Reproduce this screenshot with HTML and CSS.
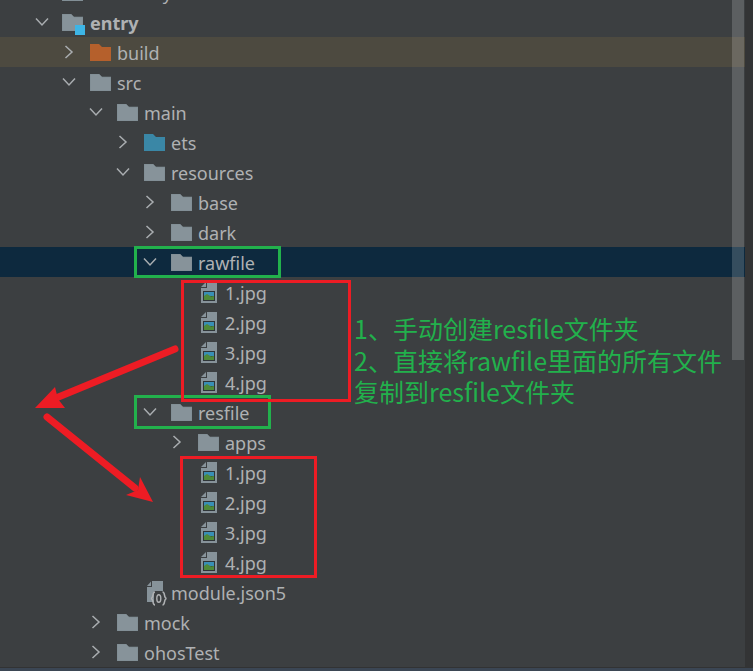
FILE: index.html
```html
<!DOCTYPE html>
<html lang="zh-CN">
<head>
<meta charset="utf-8">
<title>Project tree</title>
<link rel="stylesheet" href="styles.css">
</head>
<body>
<svg class="defs" width="0" height="0" aria-hidden="true">
  <defs>
    <symbol id="folder" viewBox="0 0 21 17"><path d="M0 0H9L12 3H21V17H0Z" fill="#87939a" stroke="#7b868d" stroke-width=".6"/></symbol>
    <symbol id="chev-r" viewBox="0 0 10 14"><path d="M1.500 1L8 7L1.500 13" fill="none" stroke="#a9adb0" stroke-width="1.500"/></symbol>
    <symbol id="chev-d" viewBox="0 0 14 10"><path d="M1 1.500L7 8L13 1.500" fill="none" stroke="#a9adb0" stroke-width="1.500"/></symbol>
    <symbol id="image" viewBox="0 0 16 21">
      <path d="M6 0H16V21H0V6H6Z" fill="#87939a"/>
      <path d="M0 5L5 0V5Z" fill="#87939a"/>
      <rect x="2" y="9" width="12" height="10" fill="#2f3538"/>
      <rect x="3" y="10" width="10" height="4" fill="#3a8fb5"/>
      <path d="M3 14L6 12L10 14.500L13 14V18H3Z" fill="#4f8a3a"/>
    </symbol>
  </defs>
</svg>
<main class="panel">
  <ul class="tree">
    <li class="row d1 plain"><svg class="fold"><use href="#folder"/></svg><span class="label">oh-library</span></li>
    <li class="row d1 module"><svg class="chev"><use href="#chev-d"/></svg>
      <span class="module-icon"><svg class="fold-big"><use href="#folder"/></svg><i class="badge"></i></span>
      <span class="label strong">entry</span></li>
    <li class="row d2 excluded"><svg class="chev"><use href="#chev-r"/></svg><svg class="fold orange" viewBox="0 0 21 17"><path d="M0 0H9L12 3H21V17H0Z"/></svg><span class="label">build</span></li>
    <li class="row d2"><svg class="chev"><use href="#chev-d"/></svg><svg class="fold"><use href="#folder"/></svg><span class="label">src</span></li>
    <li class="row d3"><svg class="chev"><use href="#chev-d"/></svg><svg class="fold"><use href="#folder"/></svg><span class="label">main</span></li>
    <li class="row d4"><svg class="chev"><use href="#chev-r"/></svg><svg class="fold blue" viewBox="0 0 21 17"><path d="M0 0H9L12 3H21V17H0Z"/></svg><span class="label">ets</span></li>
    <li class="row d4"><svg class="chev"><use href="#chev-d"/></svg><svg class="fold"><use href="#folder"/></svg><span class="label">resources</span></li>
    <li class="row d5"><svg class="chev"><use href="#chev-r"/></svg><svg class="fold"><use href="#folder"/></svg><span class="label">base</span></li>
    <li class="row d5"><svg class="chev"><use href="#chev-r"/></svg><svg class="fold"><use href="#folder"/></svg><span class="label">dark</span></li>
    <li class="row d5 selected"><svg class="chev"><use href="#chev-d"/></svg><svg class="fold"><use href="#folder"/></svg><span class="label">rawfile</span></li>
    <li class="row d6 file"><svg class="img"><use href="#image"/></svg><span class="label">1.jpg</span></li>
    <li class="row d6 file"><svg class="img"><use href="#image"/></svg><span class="label">2.jpg</span></li>
    <li class="row d6 file"><svg class="img"><use href="#image"/></svg><span class="label">3.jpg</span></li>
    <li class="row d6 file"><svg class="img"><use href="#image"/></svg><span class="label">4.jpg</span></li>
    <li class="row d5"><svg class="chev"><use href="#chev-d"/></svg><svg class="fold"><use href="#folder"/></svg><span class="label">resfile</span></li>
    <li class="row d6"><svg class="chev"><use href="#chev-r"/></svg><svg class="fold"><use href="#folder"/></svg><span class="label">apps</span></li>
    <li class="row d6 file"><svg class="img"><use href="#image"/></svg><span class="label">1.jpg</span></li>
    <li class="row d6 file"><svg class="img"><use href="#image"/></svg><span class="label">2.jpg</span></li>
    <li class="row d6 file"><svg class="img"><use href="#image"/></svg><span class="label">3.jpg</span></li>
    <li class="row d6 file"><svg class="img"><use href="#image"/></svg><span class="label">4.jpg</span></li>
    <li class="row d4 json">
      <svg class="json-icon" viewBox="0 0 20 25">
        <path d="M5 0H16V10H7V21H0V6H5Z" fill="#87939a"/>
        <path d="M0 5L4 .5V5Z" fill="#87939a"/>
        <path d="M8 11C5 11 7 17 4 17.500C7 18 5 24 8 24M15.500 11C18.500 11 16.500 17 19.500 17.500C16.500 18 18.500 24 15.500 24" fill="none" stroke="#b0b2b4" stroke-width="1.500"/>
        <ellipse cx="11.800" cy="17.500" rx="2" ry="3.800" fill="none" stroke="#b0b2b4" stroke-width="1.400"/>
      </svg><span class="label">module.json5</span></li>
    <li class="row d3"><svg class="chev"><use href="#chev-r"/></svg><svg class="fold"><use href="#folder"/></svg><span class="label">mock</span></li>
    <li class="row d3"><svg class="chev"><use href="#chev-r"/></svg><svg class="fold"><use href="#folder"/></svg><span class="label">ohosTest</span></li>
  </ul>
  <div class="scrollbar"></div>
</main>
<footer class="status"></footer>
<svg class="marks" viewBox="0 0 753 671" aria-hidden="true">
  <g fill="none" stroke="#22b14c" stroke-width="3">
    <rect x="135.500" y="247.500" width="144" height="29"/>
    <rect x="135.500" y="396.500" width="134" height="31"/>
  </g>
  <g fill="none" stroke="#ed1c24" stroke-width="3">
    <rect x="182.500" y="281.500" width="167" height="119"/>
    <rect x="181.500" y="457.500" width="134" height="119"/>
  </g>
  <g fill="#ed1c24">
    <path d="M175 349L56 398" stroke="#ed1c24" stroke-width="7" stroke-linecap="round"/>
    <path d="M35 408L55 387L58 399L65 408Z"/>
    <path d="M47 417L135 488" stroke="#ed1c24" stroke-width="7" stroke-linecap="round"/>
    <path d="M153 502L140 477L138 490L126 495Z"/>
  </g>
</svg>
<p class="note">1、手动创建resfile文件夹<br>2、直接将rawfile里面的所有文件<br>复制到resfile文件夹</p>
</body>
</html>
```
FILE: styles.css
```css
* { box-sizing: border-box; }
html, body { margin: 0; padding: 0; }
body {
  width: 753px;
  height: 671px;
  overflow: hidden;
  position: relative;
  background: #333435;
  font-family: "Noto Sans", "Noto Sans CJK SC", sans-serif;
}
.defs { position: absolute; }
.panel {
  position: relative;
  width: 745px;
  height: 667px;
  overflow: hidden;
  background: #3c3f41;
}
.status { height: 4px; background: #3b4654; border-top: 1px solid #323334; }
.tree { list-style: none; margin: -23px 0 0; padding: 0; }
.row {
  display: flex;
  align-items: center;
  height: 30px;
  font-size: 18px;
  color: #afb1b3;
  white-space: nowrap;
}
.label { padding-top: 2px; }
.d1 { padding-left: 35px; }
.d2 { padding-left: 62px; }
.d3 { padding-left: 89px; }
.d4 { padding-left: 116px; }
.d5 { padding-left: 143px; }
.d6 { padding-left: 170px; }
.plain.d1 { padding-left: 62px; }
.plain .fold { margin-right: 7px; }
.file.d6 { padding-left: 201px; }
.json.d4 { padding-left: 147px; }
.chev { width: 14px; height: 14px; margin-right: 14px; flex: none; }
.fold { width: 21px; height: 17px; margin-right: 6px; flex: none; fill: #87939a; }
.fold.orange { fill: #b5602c; }
.fold.blue { fill: #3a87a6; }
.img { width: 16px; height: 21px; margin-right: 8px; flex: none; }
.json-icon { width: 20px; height: 25px; margin-right: 4px; margin-top: 3px; flex: none; }
.module-icon { position: relative; width: 22px; height: 17px; margin-right: 6px; margin-left: -1px; flex: none; }
.fold-big { width: 21px; height: 17px; display: block; }
.badge { position: absolute; right: -1px; bottom: -4px; width: 10px; height: 10px; background: #3db5e6; }
.strong { font-weight: 700; }
.excluded { background: #4d4a40; }
.selected { background: #0d293e; }
.scrollbar {
  position: absolute;
  top: 0;
  right: 1px;
  width: 12px;
  height: 360px;
  background: rgba(255, 255, 255, 0.17);
}
.marks { position: absolute; inset: 0; width: 753px; height: 671px; pointer-events: none; }
.note {
  position: absolute;
  left: 354px;
  top: 313px;
  margin: 0;
  font-family: "Noto Sans CJK SC", "Noto Sans", sans-serif;
  font-size: 25px;
  line-height: 31.5px;
  color: #22b14c;
  white-space: nowrap;
}
```
